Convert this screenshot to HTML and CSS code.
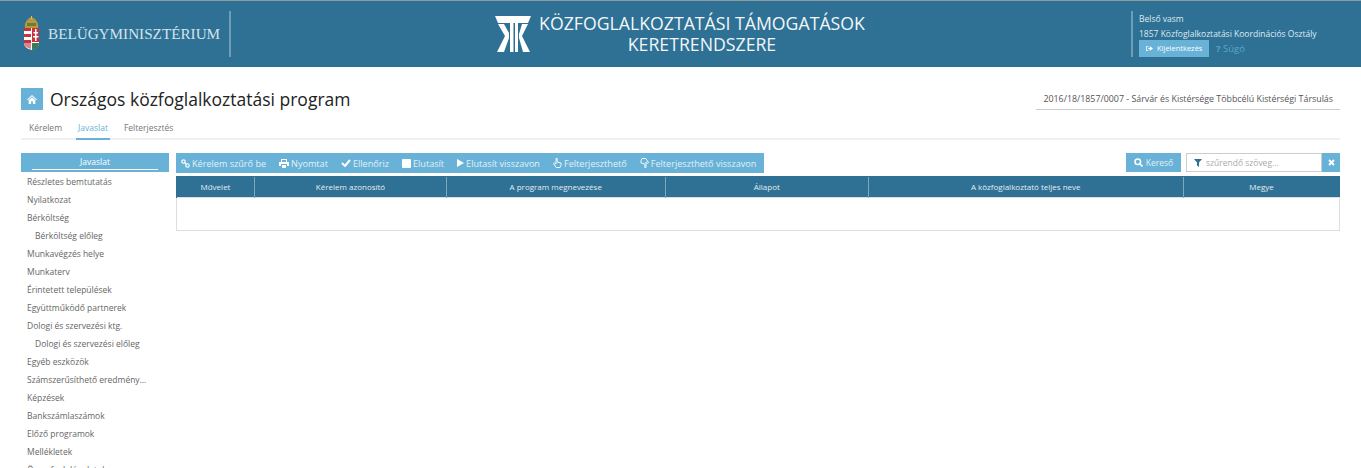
FILE: index.html
```html
<!DOCTYPE html>
<html lang="hu">
  <head>
    <meta charset="UTF-8" />
    <meta name="viewport" content="width=device-width, initial-scale=1.0" />
    <title>Közfoglalkoztatási Támogatások Keretrendszere</title>
    <link rel="stylesheet" href="styles.css">
  </head>
  <body>
    <header class="topbar">
      <div class="ministry">
        <svg class="crest" width="17" height="35" viewBox="0 0 17 35">
          <path d="M2 12C1 7 4 3 8.500 1 13 3 16 7 15 12Z" fill="#b49a3c" />
          <path d="M4 7h9v3H4z" fill="#6d7a3c" />
          <path d="M8 0h1v3H8z" fill="#d8c070" />
          <path d="M1 12h15v15c0 4-4 6-7.500 7C5 33 1 31 1 27Z" fill="#fff" />
          <path d="M1 12h7v3H1zM1 18h7v3H1zM1 24h7v3H1z" fill="#c8323c" />
          <path d="M9 12h7v14H9z" fill="#c8323c" />
          <path d="M12 13h1.500v12H12zM10.500 16h4.500v1.500h-4.500zM10 20h5.500v1.500H10z" fill="#fff" />
          <path d="M9 27h7c0 4-3 6-7 7Z" fill="#3d7a55" />
          <path d="M1 27h7v6c-4-1-7-3-7-6Z" fill="#c8323c" opacity=".6" />
        </svg>
        <span class="ministry-name">Belügyminisztérium</span>
      </div>
      <div class="app-title">
        <svg class="app-logo" width="36" height="36" viewBox="0 0 36 36">
          <path d="M0 0H36L33 7H3Z" fill="#fff" />
          <path d="M15 7h3.500v29H15Z" fill="#fff" />
          <path d="M20 7h3v29h-3Z" fill="#fff" />
          <path d="M3 8H9L14 17V22L9 36H2L10 20Z" fill="#fff" />
          <path d="M33 8H27L24 18V22L28 36H35L27 20Z" fill="#fff" />
        </svg>
        <h1>Közfoglalkoztatási Támogatások<br>Keretrendszere</h1>
      </div>
      <div class="user-box">
        <div>Belső vasm</div>
        <div>1857 Közfoglalkoztatási Koordinációs Osztály</div>
        <div class="user-actions">
          <a class="logout" href="#">
            <svg width="7" height="7" viewBox="0 0 9 8"><path d="M0 1h3v1H1v4h2v1H0ZM3 3h2V1l4 3-4 3V5H3Z" fill="#fff" /></svg>
            Kijelentkezés
          </a>
          <a class="help" href="#"><b>?</b> Súgó</a>
        </div>
      </div>
    </header>

    <div class="page-head">
      <div class="title-row">
        <span class="home-icon">
          <svg width="10" height="9" viewBox="0 0 11 10"><path d="M5.500 0 11 5l-.7.700L5.500 1.500.7 5.700 0 5ZM1.800 5.700 5.500 2.500l3.700 3.200V10H6.500V7h-2v3H1.800Z" fill="#fff" /></svg>
        </span>
        <h2>Országos közfoglalkoztatási program</h2>
        <div class="case-id">2016/18/1857/0007 - Sárvár és Kistérsége Többcélú Kistérségi Társulás</div>
      </div>
      <nav class="tabs">
        <a href="#">Kérelem</a>
        <a href="#" class="active">Javaslat</a>
        <a href="#">Felterjesztés</a>
      </nav>
    </div>

    <div class="content">
      <aside class="sidebar">
        <div class="side-head"><span>Javaslat</span></div>
        <ul class="side-menu">
          <li>Részletes bemtutatás</li>
          <li>Nyilatkozat</li>
          <li>Bérköltség</li>
          <li class="sub">Bérköltség előleg</li>
          <li>Munkavégzés helye</li>
          <li>Munkaterv</li>
          <li>Érintetett települések</li>
          <li>Együttműködő partnerek</li>
          <li>Dologi és szervezési ktg.</li>
          <li class="sub">Dologi és szervezési előleg</li>
          <li>Egyéb eszközök</li>
          <li>Számszerűsíthető eredmény...</li>
          <li>Képzések</li>
          <li>Bankszámlaszámok</li>
          <li>Előző programok</li>
          <li>Mellékletek</li>
          <li>Összefoglaló adatok</li>
        </ul>
      </aside>

      <main class="main">
        <div class="toolbar-row">
          <div class="toolbar">
            <a href="#"><svg width="9" height="9" viewBox="0 0 10 10"><g fill="none" stroke="#fff" stroke-width="1.300"><circle cx="2.800" cy="2.800" r="1.900" /><circle cx="7.200" cy="7.200" r="1.900" /><path d="M3.800 3.800l2.400 2.400" /></g></svg>Kérelem szűrő be</a>
            <a href="#"><svg width="10" height="9" viewBox="0 0 10 9"><path d="M2 0h6v3H7V1H3v2H2ZM0 3h10v4H8V5H2v2H0ZM3 6h4v3H3Z" fill="#fff" /></svg>Nyomtat</a>
            <a href="#"><svg width="10" height="8" viewBox="0 0 10 8"><path d="M1 4l3 3 5-6" fill="none" stroke="#fff" stroke-width="2" /></svg>Ellenőriz</a>
            <a href="#"><svg width="9" height="9" viewBox="0 0 9 9"><rect width="9" height="9" rx="1" fill="#fff" /></svg>Elutasít</a>
            <a href="#"><svg width="7" height="8" viewBox="0 0 8 9"><path d="M0 0l8 4.500L0 9Z" fill="#fff" /></svg>Elutasít visszavon</a>
            <a href="#"><svg width="9" height="10" viewBox="0 0 9 10"><path d="M3 .5h1.200v3.500l3.800 1v2.500L7 9.500H3.200L.5 5.500 1.500 4.800 3 6Z" fill="none" stroke="#fff" stroke-width=".9" /></svg>Felterjeszthető</a>
            <a href="#"><svg width="9" height="10" viewBox="0 0 9 10"><path d="M6 9.500H4.800V6L1 5V2.500L2 .5h3.800L8.500 4.500 7.500 5.200 6 4Z" fill="none" stroke="#fff" stroke-width=".9" /></svg>Felterjeszthető visszavon</a>
          </div>
          <div class="search">
            <a class="search-btn" href="#"><svg width="9" height="9" viewBox="0 0 9 9"><circle cx="3.800" cy="3.800" r="2.800" fill="none" stroke="#fff" stroke-width="1.500" /><path d="M6 6l2.500 2.500" stroke="#fff" stroke-width="1.600" /></svg>Kereső</a>
            <div class="search-input">
              <svg width="8" height="8" viewBox="0 0 8 8"><path d="M0 0h8L5 3.500V8L3 6.500v-3Z" fill="#2e7195" /></svg>
              <input type="text" placeholder="szűrendő szöveg...">
            </div>
            <a class="search-clear" href="#"><svg width="7" height="7" viewBox="0 0 7 7"><path d="M1 1l5 5M6 1L1 6" stroke="#fff" stroke-width="1.900" /></svg></a>
          </div>
        </div>
        <table class="grid">
          <thead>
            <tr>
              <th class="col-action">Művelet</th>
              <th class="col-id">Kérelem azonosító</th>
              <th class="col-name">A program megnevezése</th>
              <th class="col-state">Állapot</th>
              <th class="col-person">A közfoglalkoztató teljes neve</th>
              <th>Megye</th>
            </tr>
          </thead>
          <tbody>
            <tr><td colspan="6"></td></tr>
          </tbody>
        </table>
      </main>
    </div>
  </body>
</html>
```

FILE: styles.css
```css
html,
body {
  height: 100%;
}

body {
  font-family: "Open Sans", sans-serif;
  font-size: 8.500px;
  margin: 0;
  color: #666;
  background-color: #fff;
  overflow: hidden;
}

a {
  text-decoration: none;
}

.topbar {
  height: 67px;
  box-sizing: border-box;
  border-top: 1px solid #8c9ca2;
  background-color: #2e7195;
  display: flex;
  align-items: center;
  color: #dfeaf0;
}

.ministry {
  width: 231px;
  height: 46px;
  box-sizing: border-box;
  margin-top: -1px;
  padding-left: 23px;
  border-right: 2px solid #6f9db5;
  display: flex;
  align-items: center;
  gap: 8px;
}

.ministry-name {
  font-family: "Liberation Serif", serif;
  font-size: 15.200px;
  text-transform: uppercase;
  color: #d5e3ea;
  white-space: nowrap;
}

.app-title {
  flex: 1;
  display: flex;
  justify-content: center;
  align-items: center;
  gap: 8px;
  padding-right: 2px;
}

.app-title h1 {
  margin: 0;
  font-size: 17.700px;
  font-weight: 400;
  line-height: 21px;
  text-align: center;
  text-transform: uppercase;
  color: #f2f6f8;
}

.user-box {
  width: 230px;
  height: 46px;
  box-sizing: border-box;
  margin-top: -1px;
  padding-left: 6px;
  border-left: 2px solid #6f9db5;
  line-height: 15px;
}

.user-actions {
  display: flex;
  align-items: center;
  gap: 7px;
  margin-top: -1px;
}

.logout {
  height: 17px;
  width: 70px;
  box-sizing: border-box;
  padding-left: 7px;
  display: flex;
  align-items: center;
  gap: 4px;
  font-size: 7.500px;
  color: #fff;
  background-color: #68b2d8;
}

.help {
  font-size: 9.500px;
  color: #5ba6cc;
}

.page-head {
  padding: 0 21px;
}

.title-row {
  display: flex;
  align-items: center;
  height: 44px;
  margin-top: 10px;
}

.home-icon {
  width: 22px;
  height: 22px;
  display: flex;
  align-items: center;
  justify-content: center;
  background-color: #68b2d8;
  margin-right: 7px;
}

.title-row h2 {
  flex: 1;
  margin: 0;
  font-size: 17.500px;
  font-weight: 400;
  color: #222;
}

.case-id {
  padding: 3px 7px 4px;
  border-bottom: 1px solid #ccc;
  margin-top: 2px;
  font-size: 8.850px;
  color: #555;
}

.tabs {
  display: flex;
  gap: 12px;
  height: 19px;
  border-bottom: 2px solid #f0f0f0;
  box-sizing: border-box;
}

.tabs a {
  height: 19px;
  box-sizing: border-box;
  padding: 1px 2px 0;
  color: #777;
}

.tabs a:first-child {
  padding-left: 8px;
}

.tabs a.active {
  color: #68b2d8;
  border-bottom: 2px solid #68b2d8;
}

.content {
  display: flex;
  gap: 7px;
  padding: 13px 21px 0;
}

.sidebar {
  width: 148px;
  flex-shrink: 0;
}

.side-head {
  height: 19px;
  padding: 0 11px;
  background-color: #68b2d8;
  color: #fff;
  text-align: center;
  line-height: 17px;
}

.side-head span {
  display: block;
  height: 16px;
  border-bottom: 1px solid #fff;
}

.side-menu {
  list-style: none;
  margin: 0;
  padding: 1px 0 0 6px;
}

.side-menu li {
  height: 18px;
  line-height: 18px;
  white-space: nowrap;
}

.side-menu li.sub {
  padding-left: 8px;
}

.main {
  flex: 1;
}

.toolbar-row {
  display: flex;
  justify-content: space-between;
  margin-bottom: 3px;
}

.toolbar {
  height: 20px;
  padding: 0 8px 0 5px;
  display: flex;
  align-items: center;
  gap: 13px;
  font-size: 9.100px;
  background-color: #68b2d8;
}

.toolbar a {
  display: flex;
  align-items: center;
  gap: 2px;
  color: #e3f0f6;
  white-space: nowrap;
}

.search {
  display: flex;
  align-items: center;
  height: 19px;
}

.search-btn {
  height: 19px;
  width: 55px;
  display: flex;
  align-items: center;
  justify-content: center;
  gap: 3px;
  margin-right: 5px;
  color: #e3f0f6;
  background-color: #68b2d8;
}

.search-input {
  width: 136px;
  height: 19px;
  box-sizing: border-box;
  border: 1px solid #ccc;
  display: flex;
  align-items: center;
  gap: 4px;
  padding-left: 7px;
}

.search-input input {
  border: none;
  outline: none;
  padding: 0;
  width: 110px;
  font-family: "Open Sans", sans-serif;
  font-size: 8.500px;
}

.search-input input::placeholder {
  color: #aaa;
}

.search-clear {
  width: 18px;
  height: 19px;
  display: flex;
  align-items: center;
  justify-content: center;
  background-color: #68b2d8;
}

.grid {
  width: 100%;
  border-collapse: collapse;
  table-layout: fixed;
}

.grid th {
  height: 21px;
  padding: 0 0 2px;
  box-sizing: border-box;
  font-size: 8px;
  font-weight: 400;
  color: #e3edf2;
  background-color: #2e7195;
  border-left: 1px solid #7fa7bc;
  border-top: 1px solid #2e7195;
}

.grid th:first-child {
  border-left: 1px solid #2e7195;
}

.grid td {
  height: 32px;
  padding: 0;
  border: 1px solid #ddd;
}

.col-action {
  width: 78px;
}

.col-id {
  width: 192px;
}

.col-name {
  width: 218.500px;
}

.col-state {
  width: 203.500px;
}

.col-person {
  width: 314.500px;
}
```
